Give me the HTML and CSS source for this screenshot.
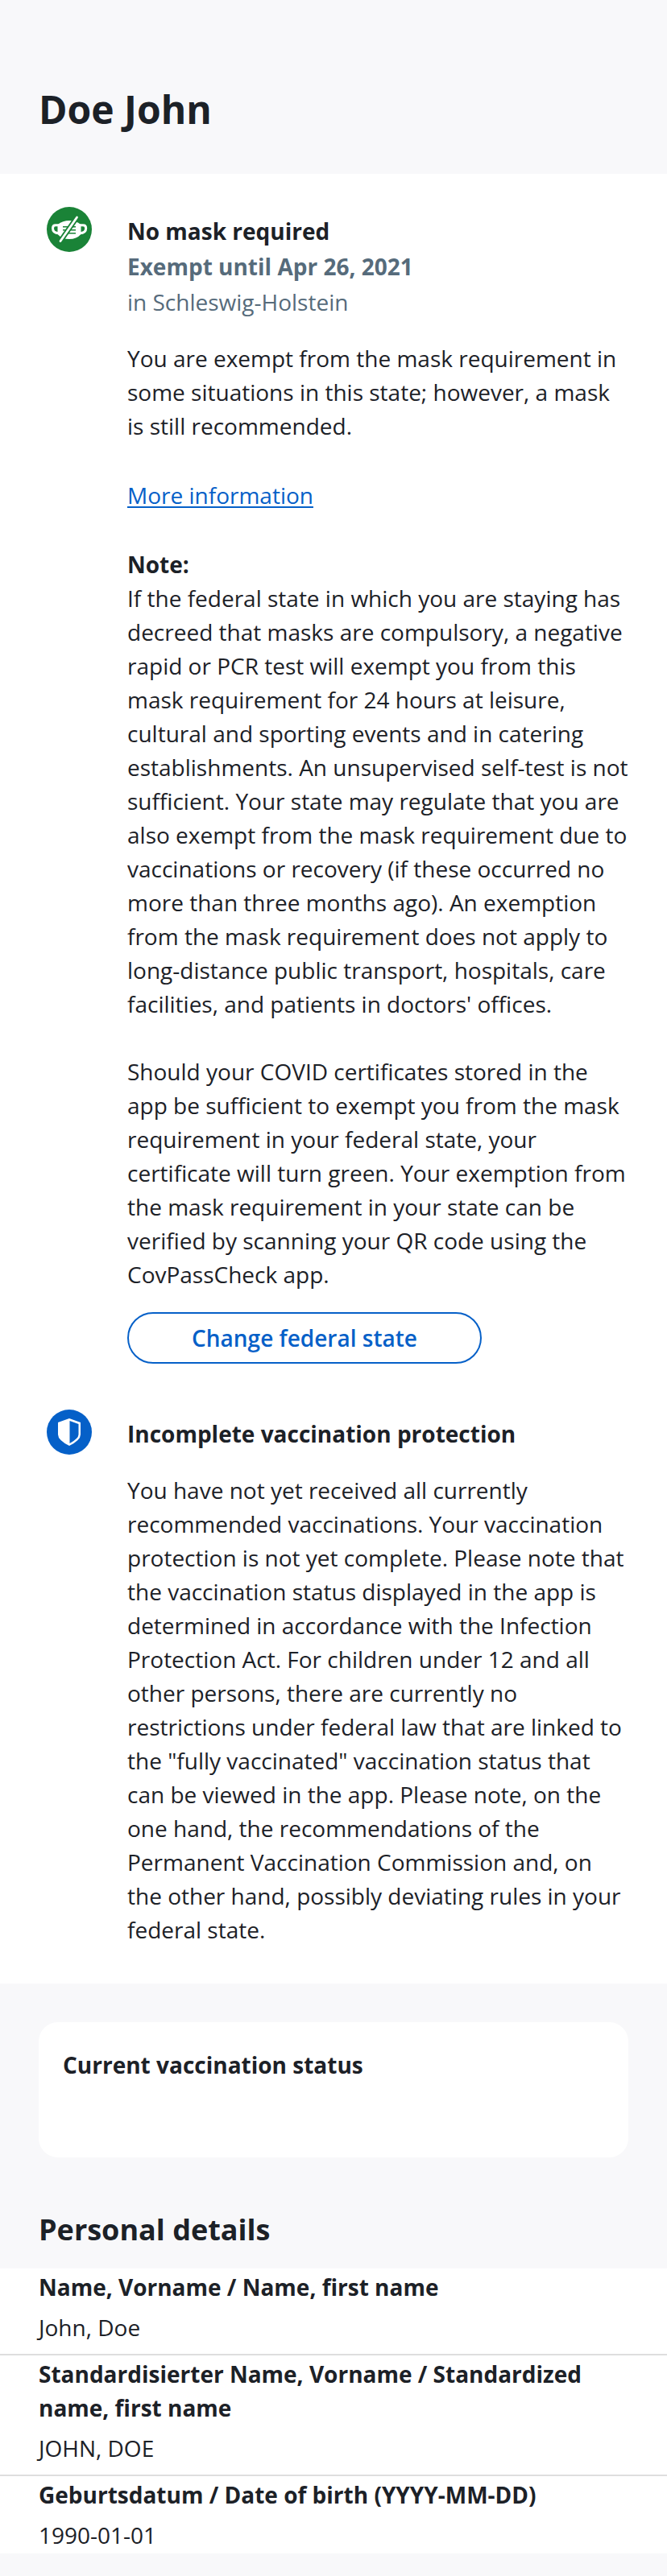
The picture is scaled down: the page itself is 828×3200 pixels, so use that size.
FILE: index.html
```
<!DOCTYPE html>
<html lang="en"><head><meta charset="utf-8"><title>Doe John</title><link rel="stylesheet" href="styles.css"></head>
<body>
<header class="head"><h1>Doe John</h1></header>
<main class="panel">
<section class="item">
<svg class="icon" viewBox="0 0 56 56"><circle cx="28" cy="28" r="28" fill="#1a8337"/><path d="M15 22.800H11Q7.500 22.800 7.500 26.500 7.500 32.500 15 32.700M41 22.800h4Q48.700 22.800 48.700 26.500 48.700 32.500 41 32.700" fill="none" stroke="#fff" stroke-width="3"/><path d="M13.500 22Q20 17 28 17t14.500 5v12q-5.500 6-14.500 6T13.500 34z" fill="#fff"/><path d="M20 24.700h16M20 28.700h16M20 32.700h16" stroke="#1a8337" stroke-width="1.500"/><path d="M17 42.500 37.500 13" stroke="#1a8337" stroke-width="6.500"/><path d="M17 42.500 37.500 13" stroke="#fff" stroke-width="2.800" stroke-linecap="round"/></svg>
<div class="body">
<h2>No mask required</h2>
<p class="sub strong">Exempt until Apr 26, 2021</p>
<p class="sub">in Schleswig-Holstein</p>
<p class="text first">You are exempt from the mask requirement in<br>some situations in this state; however, a mask<br>is still recommended.</p>
<p class="more"><a>More information</a></p>
<p class="note">Note:</p>
<p class="text">If the federal state in which you are staying has<br>decreed that masks are compulsory, a negative<br>rapid or PCR test will exempt you from this<br>mask requirement for 24 hours at leisure,<br>cultural and sporting events and in catering<br>establishments. An unsupervised self-test is not<br>sufficient. Your state may regulate that you are<br>also exempt from the mask requirement due to<br>vaccinations or recovery (if these occurred no<br>more than three months ago). An exemption<br>from the mask requirement does not apply to<br>long-distance public transport, hospitals, care<br>facilities, and patients in doctors' offices.<br><br>Should your COVID certificates stored in the<br>app be sufficient to exempt you from the mask<br>requirement in your federal state, your<br>certificate will turn green. Your exemption from<br>the mask requirement in your state can be<br>verified by scanning your QR code using the<br>CovPassCheck app.</p>
<button class="btn">Change federal state</button>
</div></section>
<section class="item second">
<svg class="icon" viewBox="0 0 56 56"><circle cx="28" cy="28" r="28" fill="#0560c8"/><path d="M28 11 42 16v15q0 7-14 14-14-7-14-14V16z" fill="#fff"/><path d="M28.500 14 39.500 18v13q0 5-11 11z" fill="#0560c8"/></svg>
<div class="body">
<h2>Incomplete vaccination protection</h2>
<p class="text vacc">You have not yet received all currently<br>recommended vaccinations. Your vaccination<br>protection is not yet complete. Please note that<br>the vaccination status displayed in the app is<br>determined in accordance with the Infection<br>Protection Act. For children under 12 and all<br>other persons, there are currently no<br>restrictions under federal law that are linked to<br>the "fully vaccinated" vaccination status that<br>can be viewed in the app. Please note, on the<br>one hand, the recommendations of the<br>Permanent Vaccination Commission and, on<br>the other hand, possibly deviating rules in your<br>federal state.</p>
</div></section>
</main>
<section class="card"><h2>Current vaccination status</h2></section>
<h3 class="title">Personal details</h3>
<dl class="details">
<div class="row"><dt>Name, Vorname / Name, first name</dt><dd>John, Doe</dd></div>
<div class="row"><dt>Standardisierter Name, Vorname / Standardized<br>name, first name</dt><dd>JOHN, DOE</dd></div>
<div class="row"><dt>Geburtsdatum / Date of birth (YYYY-MM-DD)</dt><dd>1990-01-01</dd></div>
</dl>
</body></html>
```
FILE: styles.css
```
* { box-sizing: border-box; margin: 0; padding: 0; }
body { background: #f8f8fa; color: #1c2127; font: 28px/42px "Open Sans", sans-serif; height: 3200px; overflow: hidden; white-space: nowrap; }
.head { height: 216px; padding: 102px 48px 0; }
h1 { font-size: 48px; line-height: 67px; font-weight: 700; }
.panel { background: #fff; height: 2248px; padding-top: 41px; }
.item { display: flex; padding-left: 58px; }
.second { margin-top: 57px; }
.icon { width: 56px; height: 56px; flex: none; }
.body { margin-left: 44px; padding-top: 8px; }
h2 { font-size: 28px; line-height: 44px; font-weight: 700; }
.sub { color: #566b7b; line-height: 44px; }
.strong { font-weight: 700; }
.first { margin-top: 27px; }
.more { margin-top: 44px; color: #0560c8; }
.more a { text-decoration: underline; text-decoration-thickness: 2px; text-underline-offset: 3px; }
.note { font-weight: 700; margin-top: 44px; }
.btn { display: block; width: 440px; height: 64px; margin-top: 26px; border: 2px solid #0560c8; border-radius: 32px; background: #fff; color: #0560c8; font: 600 28px "Open Sans", sans-serif; }
.vacc { margin-top: 27px; }
.card { margin: 48px 48px 63px; height: 168px; border-radius: 24px; background: #fff; padding: 31px 30px; }
.title { font-size: 36px; line-height: 53px; margin: 0 48px 22px; }
.details { background: #fff; }
.row { padding: 2px 48px 12px; border-bottom: 2px solid #dedede; }
.row:last-child { padding-bottom: 2px; border-bottom: 0; }
dt { font-weight: 700; }
dd { margin-top: 8px; }
```
